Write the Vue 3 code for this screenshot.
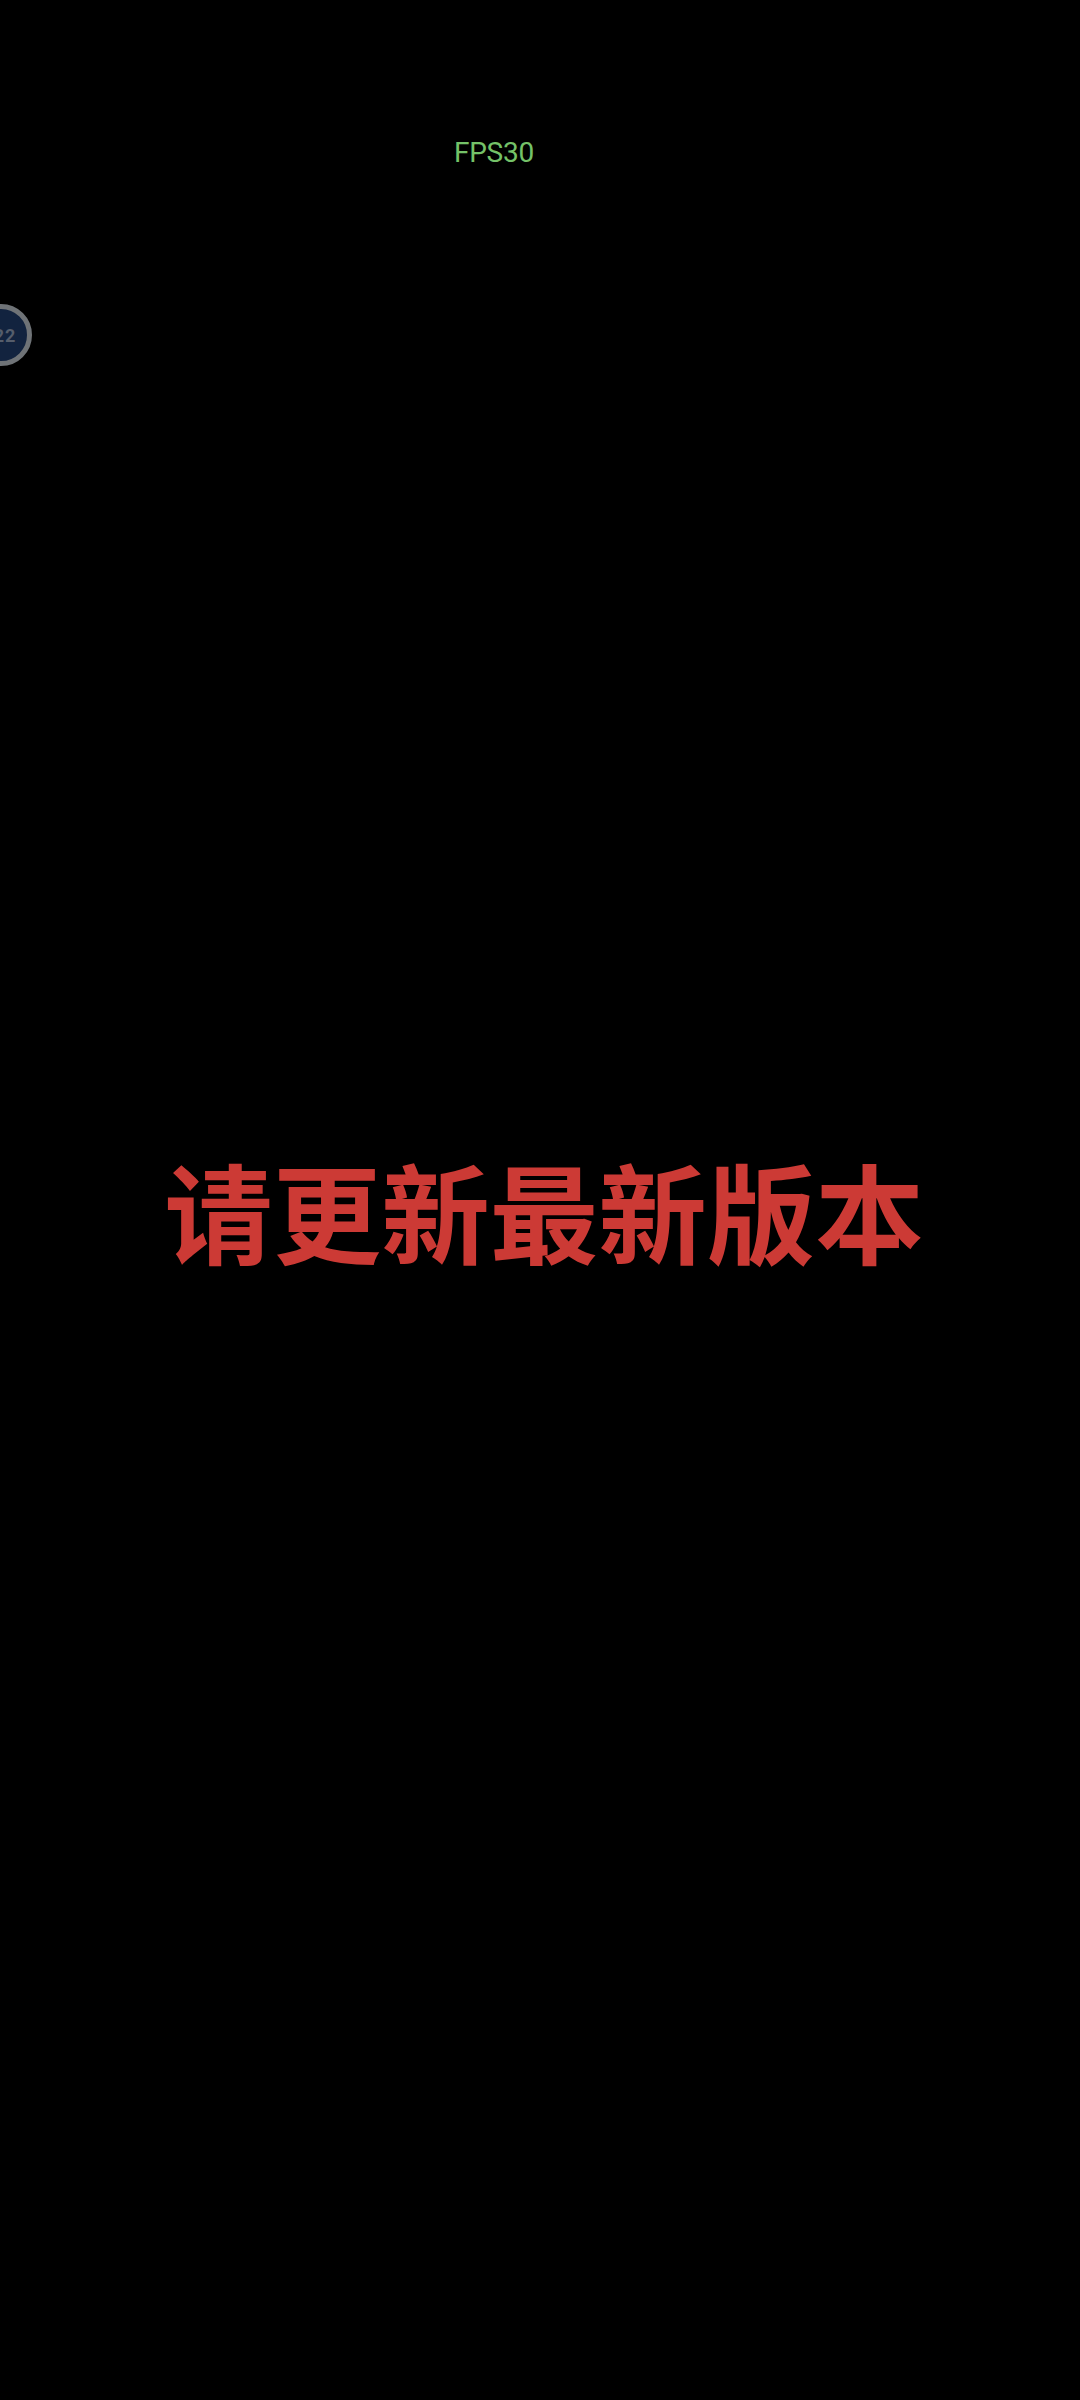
<template>
  <div class="screen">
    <div class="fps">FPS30</div>

    <!-- floating ball, half hidden at the left edge -->
    <div class="float-ball">
      <span class="ball-text">22</span>
    </div>

    <div class="notice">请更新最新版本</div>
  </div>
</template>

<script setup>
</script>

<style>
html,
body {
  margin: 0;
  background: #000;
}
</style>

<style scoped>
.screen {
  position: relative;
  width: 1080px;
  height: 2400px;
  background: #000;
  overflow: hidden;
  display: flex;
  flex-direction: column;
  align-items: center;
  font-family: "Noto Sans CJK SC", sans-serif;
}

.fps {
  margin-top: 135px;
  margin-left: -92px;
  font-family: Roboto, "Noto Sans", sans-serif;
  font-size: 28px;
  font-weight: 400;
  line-height: 36px;
  letter-spacing: -0.2px;
  color: #74c268;
}

.float-ball {
  position: absolute;
  left: -30px;
  top: 304px;
  width: 62px;
  height: 62px;
  box-sizing: border-box;
  border: 5px solid #6f7377;
  border-radius: 50%;
  background: #12233f;
  display: flex;
  align-items: center;
  justify-content: center;
}

.ball-text {
  font-family: Roboto, sans-serif;
  font-size: 18px;
  font-weight: 700;
  color: #555d6b;
  letter-spacing: 1px;
  margin-left: 8px;
}

.notice {
  margin-top: 974px;
  margin-left: 8px;
  font-size: 108.5px;
  font-weight: 700;
  line-height: 128px;
  color: #cc3a35;
  white-space: nowrap;
}
</style>
